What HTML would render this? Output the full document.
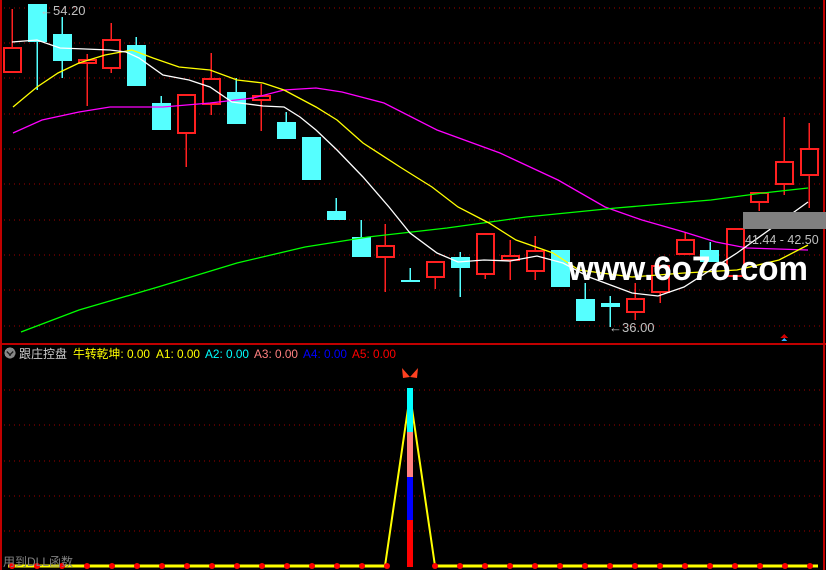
<!DOCTYPE html>
<html><head><meta charset="utf-8">
<style>
html,body{margin:0;padding:0;background:#000;width:826px;height:570px;overflow:hidden}
svg{display:block}
text{font-family:"Liberation Sans","Noto Sans CJK SC",sans-serif}
</style></head><body>
<svg width="826" height="570" viewBox="0 0 826 570" xmlns="http://www.w3.org/2000/svg" shape-rendering="crispEdges">
<rect width="826" height="570" fill="#000"/>
<g stroke="#a00000" stroke-width="1" stroke-dasharray="1 4">
<line x1="4" y1="8" x2="822" y2="8"/><line x1="4" y1="43" x2="822" y2="43"/><line x1="4" y1="78" x2="822" y2="78"/>
<line x1="4" y1="114" x2="822" y2="114"/><line x1="4" y1="149" x2="822" y2="149"/><line x1="4" y1="184" x2="822" y2="184"/>
<line x1="4" y1="220" x2="822" y2="220"/><line x1="4" y1="255" x2="822" y2="255"/><line x1="4" y1="290" x2="822" y2="290"/>
<line x1="4" y1="326" x2="822" y2="326"/>
<line x1="4" y1="390" x2="822" y2="390"/><line x1="4" y1="425" x2="822" y2="425"/><line x1="4" y1="461" x2="822" y2="461"/>
<line x1="4" y1="496" x2="822" y2="496"/><line x1="4" y1="531" x2="822" y2="531"/>
</g>
<g stroke="#c00000" stroke-width="2">
<line x1="1" y1="0" x2="1" y2="570"/><line x1="824" y1="0" x2="824" y2="570"/>
<line x1="0" y1="344" x2="826" y2="344"/>
</g>
<g stroke-width="1.5">
<g stroke="#ff2020">
<line x1="12" y1="9" x2="12" y2="72"/><line x1="87" y1="54" x2="87" y2="106"/><line x1="111" y1="23" x2="111" y2="73"/>
<line x1="186" y1="95" x2="186" y2="167"/><line x1="211" y1="53" x2="211" y2="115"/><line x1="261" y1="84" x2="261" y2="131"/>
<line x1="385" y1="224" x2="385" y2="292"/><line x1="435" y1="262" x2="435" y2="289"/><line x1="485" y1="234" x2="485" y2="279"/>
<line x1="510" y1="240" x2="510" y2="280"/><line x1="535" y1="236" x2="535" y2="280"/><line x1="635" y1="283" x2="635" y2="320"/>
<line x1="660" y1="266" x2="660" y2="303"/><line x1="685" y1="232" x2="685" y2="254"/><line x1="759" y1="193" x2="759" y2="211"/>
<line x1="784" y1="117" x2="784" y2="195"/><line x1="809" y1="123" x2="809" y2="208"/>
</g>
<g stroke="#55ffff">
<line x1="37" y1="5" x2="37" y2="90"/><line x1="62" y1="17" x2="62" y2="78"/><line x1="136" y1="37" x2="136" y2="86"/>
<line x1="161" y1="96" x2="161" y2="130"/><line x1="236" y1="78" x2="236" y2="124"/><line x1="286" y1="112" x2="286" y2="139"/>
<line x1="336" y1="198" x2="336" y2="219"/><line x1="361" y1="220" x2="361" y2="257"/><line x1="410" y1="268" x2="410" y2="282"/>
<line x1="460" y1="252" x2="460" y2="297"/><line x1="585" y1="283" x2="585" y2="320"/><line x1="610" y1="296" x2="610" y2="327"/>
<line x1="710" y1="242" x2="710" y2="262"/>
</g>
</g>
<g fill="#000" stroke="#ff2020" stroke-width="2">
<rect x="4" y="48" width="17" height="24"/><rect x="79" y="60" width="17" height="3"/><rect x="103" y="40" width="17" height="28"/>
<rect x="178" y="95" width="17" height="38"/><rect x="203" y="79" width="17" height="25"/><rect x="253" y="96" width="17" height="4"/>
<rect x="377" y="246" width="17" height="11"/><rect x="427" y="262" width="17" height="15"/><rect x="477" y="234" width="17" height="40"/>
<rect x="502" y="256" width="17" height="4"/><rect x="527" y="251" width="17" height="20"/><rect x="627" y="299" width="17" height="13"/>
<rect x="652" y="266" width="17" height="26"/><rect x="677" y="240" width="17" height="14"/><rect x="727" y="229" width="17" height="47"/>
<rect x="751" y="193" width="17" height="9"/><rect x="776" y="162" width="17" height="22"/><rect x="801" y="149" width="17" height="26"/>
</g>
<g fill="#55ffff">
<rect x="28" y="4" width="19" height="38"/><rect x="53" y="34" width="19" height="27"/><rect x="127" y="45" width="19" height="41"/>
<rect x="152" y="103" width="19" height="27"/><rect x="227" y="92" width="19" height="32"/><rect x="277" y="122" width="19" height="17"/>
<rect x="302" y="137" width="19" height="43"/><rect x="327" y="211" width="19" height="9"/><rect x="352" y="237" width="19" height="20"/>
<rect x="401" y="280" width="19" height="2"/><rect x="451" y="257" width="19" height="11"/><rect x="551" y="250" width="19" height="37"/>
<rect x="576" y="299" width="19" height="22"/><rect x="601" y="303" width="19" height="4"/><rect x="700" y="250" width="19" height="12"/>
</g>
<g fill="none" stroke-width="1.3" shape-rendering="auto">
<polyline stroke="#ff00ff" points="13,133 42,120 79,112 110,107 163,107 210,103 253,98 284,90 316,88 342,92 384,103 437,130 500,153 558,180 605,207 642,220 684,232 716,242 747,248 808,250"/>
<polyline stroke="#00ff00" points="21,332 79,310 158,287 237,263 305,247 368,237 447,228 526,217 616,208 711,200 763,193 808,188"/>
<polyline stroke="#ffff00" points="13,107 37,87 58,73 79,63 105,55 132,50 153,58 179,67 210,70 237,80 263,83 284,90 316,107 337,120 363,143 400,167 432,187 458,207 489,223 516,240 553,253 579,270 632,277 684,273 737,270 779,260 808,245"/>
<polyline stroke="#ffffff" points="12,42 37,40 60,48 110,50 126,52 139,58 163,75 189,80 210,87 232,102 263,106 284,107 300,117 316,130 337,150 363,177 389,207 410,233 437,253 458,262 484,260 510,261 537,256 563,263 589,277 632,293 658,296 684,287 737,253 808,202"/>
</g>
<text x="40" y="15" font-size="13" fill="#c0c0c0">←54.20</text>
<text x="609" y="332" font-size="13" fill="#c0c0c0">←36.00</text>
<rect x="743" y="212" width="83" height="17" fill="#808080"/>
<text x="745" y="244" font-size="12.5" fill="#c0c0c0">41.44 - 42.50</text>
<text x="568" y="280" font-size="34" font-weight="bold" fill="#ffffff" textLength="240" lengthAdjust="spacingAndGlyphs">www.6o7o.com</text>
<polygon points="784,334 780,338 788,338" fill="#d00000"/><polygon points="784,338 781,341 787,341" fill="#33aaff"/>
<circle cx="10" cy="353" r="5.5" fill="#888"/><path d="M7,351.5 L10,355 L13,351.5" stroke="#222" stroke-width="1.5" fill="none"/>
<g font-size="12">
<text x="19" y="358" fill="#d0d0d0" textLength="48" lengthAdjust="spacingAndGlyphs">跟庄控盘</text>
<text x="73" y="358" fill="#ffff00" textLength="77" lengthAdjust="spacingAndGlyphs">牛转乾坤: 0.00</text>
<text x="156" y="358" fill="#ffff00" textLength="44" lengthAdjust="spacingAndGlyphs">A1: 0.00</text>
<text x="205" y="358" fill="#00ffff" textLength="44" lengthAdjust="spacingAndGlyphs">A2: 0.00</text>
<text x="254" y="358" fill="#ff8080" textLength="44" lengthAdjust="spacingAndGlyphs">A3: 0.00</text>
<text x="303" y="358" fill="#0000ff" textLength="44" lengthAdjust="spacingAndGlyphs">A4: 0.00</text>
<text x="352" y="358" fill="#ff0000" textLength="44" lengthAdjust="spacingAndGlyphs">A5: 0.00</text>
</g>
<g fill="#ff4020" shape-rendering="auto"><path d="M410,377 L402,368 L403,378 Z"/><path d="M410,377 L418,368 L417,378 Z"/></g>
<polyline shape-rendering="auto" fill="none" stroke="#ffff00" stroke-width="2" points="385,566 410,395 435,566"/>
<rect x="407" y="388" width="6" height="44" fill="#00ffff"/>
<rect x="407" y="432" width="6" height="45" fill="#ff8080"/>
<rect x="407" y="477" width="6" height="43" fill="#0000ff"/>
<rect x="407" y="520" width="6" height="47" fill="#ff0000"/>
<line x1="8" y1="566" x2="386" y2="566" stroke="#ffff00" stroke-width="3"/>
<line x1="434" y1="566" x2="818" y2="566" stroke="#ffff00" stroke-width="3"/>
<g fill="#ff0000" shape-rendering="auto">
<circle cx="12" cy="566" r="3"/><circle cx="37" cy="566" r="3"/><circle cx="62" cy="566" r="3"/><circle cx="87" cy="566" r="3"/><circle cx="112" cy="566" r="3"/><circle cx="137" cy="566" r="3"/><circle cx="162" cy="566" r="3"/><circle cx="187" cy="566" r="3"/><circle cx="212" cy="566" r="3"/><circle cx="237" cy="566" r="3"/><circle cx="262" cy="566" r="3"/><circle cx="287" cy="566" r="3"/><circle cx="312" cy="566" r="3"/><circle cx="337" cy="566" r="3"/><circle cx="362" cy="566" r="3"/><circle cx="387" cy="566" r="3"/><circle cx="435" cy="566" r="3"/><circle cx="460" cy="566" r="3"/><circle cx="485" cy="566" r="3"/><circle cx="510" cy="566" r="3"/><circle cx="535" cy="566" r="3"/><circle cx="560" cy="566" r="3"/><circle cx="585" cy="566" r="3"/><circle cx="610" cy="566" r="3"/><circle cx="635" cy="566" r="3"/><circle cx="660" cy="566" r="3"/><circle cx="685" cy="566" r="3"/><circle cx="710" cy="566" r="3"/><circle cx="735" cy="566" r="3"/><circle cx="760" cy="566" r="3"/><circle cx="785" cy="566" r="3"/><circle cx="810" cy="566" r="3"/>
</g>
<text x="3" y="566" font-size="12" fill="#808080">用到DLL函数</text>
</svg>
</body></html>
